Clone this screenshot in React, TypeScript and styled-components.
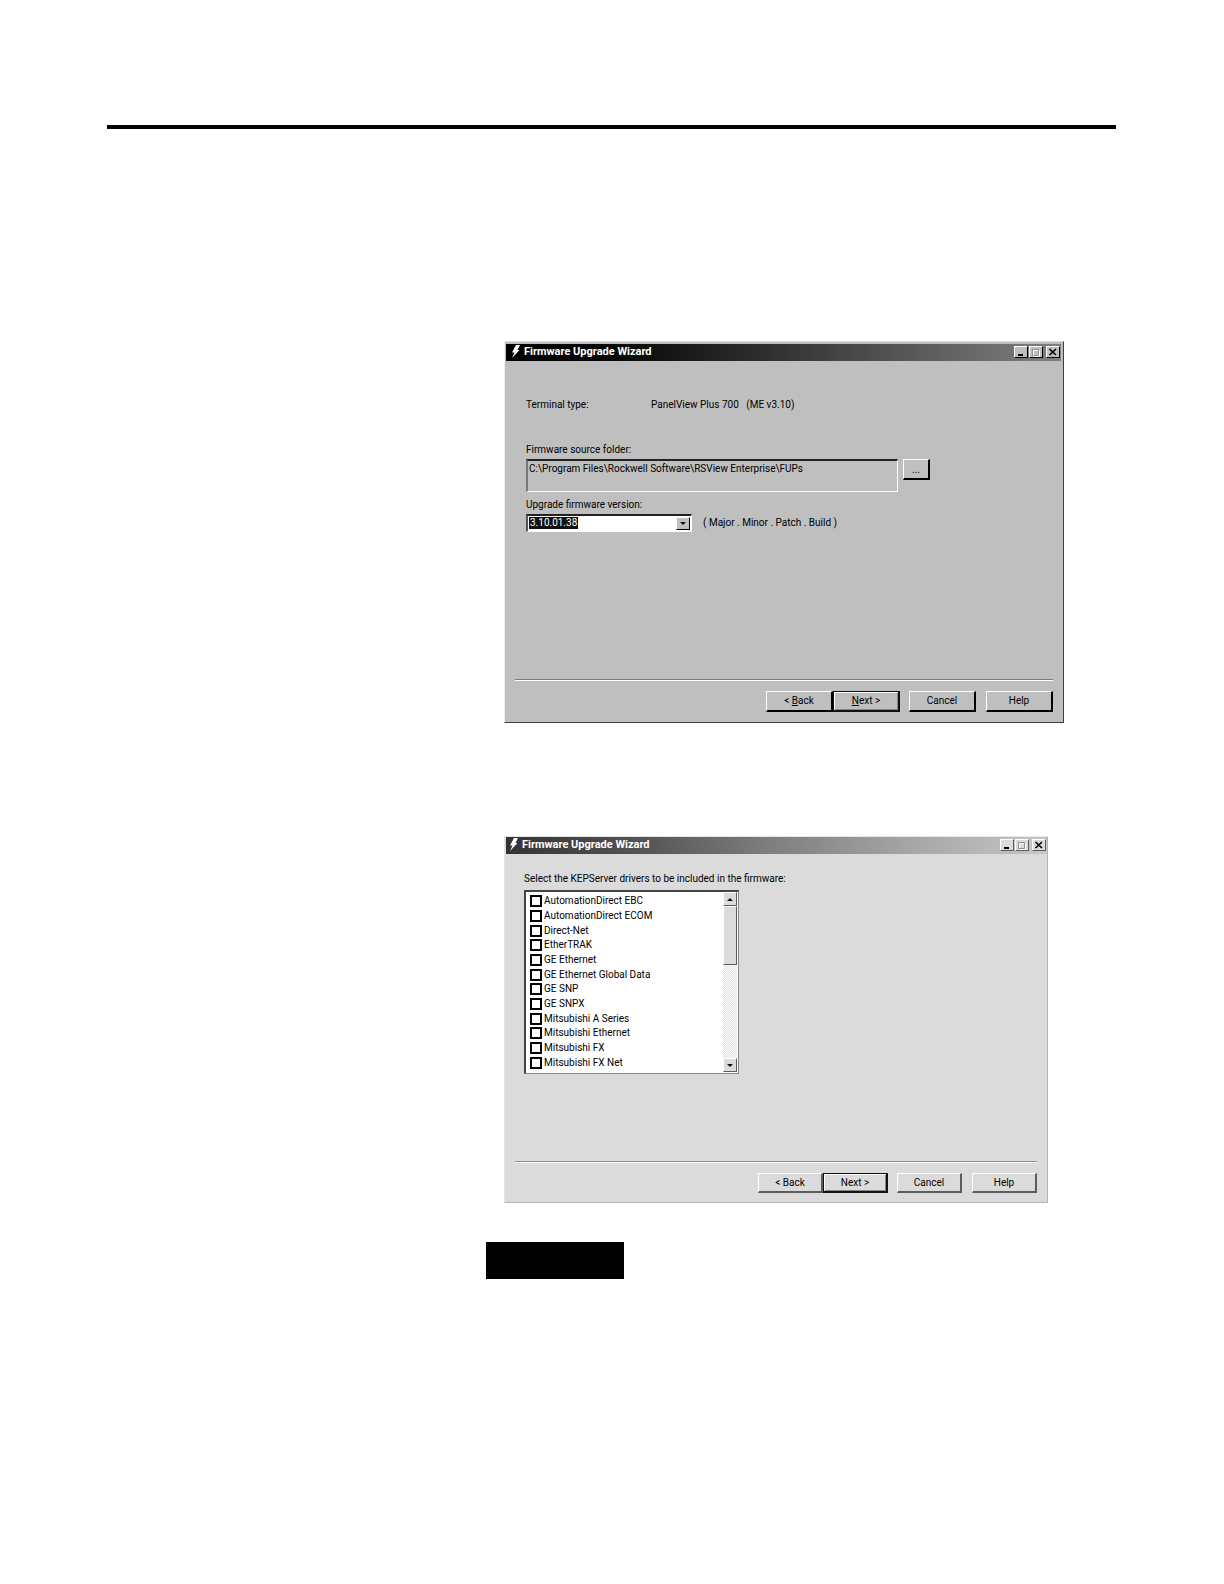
import React from "react";
import styled, { createGlobalStyle, css, ThemeProvider } from "styled-components";

type Tone = {
  face: string;
  title: string;
  hi: string;
  edgeTop: string;
  edgeLeft: string;
  edgeDark: string;
  shadow: string;
  groove: string;
};

const darkTone: Tone = {
  face: "#bfbfbf",
  title: "linear-gradient(90deg, #000 0%, #080808 20%, #2c2c2c 45%, #4c4c4c 65%, #6a6a6a 85%, #808080 100%)",
  hi: "#fff",
  edgeTop: "#ddd",
  edgeLeft: "#efefef",
  edgeDark: "#404040",
  shadow: "#000",
  groove: "#7a7a7a",
};

const lightTone: Tone = {
  face: "#dbdbdb",
  title: "linear-gradient(90deg, #333 0%, #555 25%, #808080 50%, #a6a6a6 75%, #c6c6c6 100%)",
  hi: "#fff",
  edgeTop: "#e6e6e6",
  edgeLeft: "#e6e6e6",
  edgeDark: "#b4b4b4",
  shadow: "#5c5c5c",
  groove: "#8c8c8c",
};

const Global = createGlobalStyle`
  *, *::before, *::after { box-sizing: border-box; }
  body { margin: 0; background: #fff; }
  body, button, select, textarea, input {
    font-family: Roboto, "Liberation Sans", sans-serif;
    font-size: 10px;
    line-height: 12px;
    color: #000;
  }
`;

const Page = styled.main`
  padding: 125px 108px 304px 107px;
`;

const Rule = styled.hr`
  height: 4px;
  margin: 0;
  border: 0;
  background: #000;
`;

const Column = styled.div`
  display: flex;
  flex-direction: column;
  padding: 212px 0 0 379px;
`;

const Window = styled.section<{ $width: number; $gap: number }>`
  display: flex;
  flex-direction: column;
  max-width: ${(p) => p.$width}px;
  margin: 0 0 ${(p) => p.$gap}px 18px;
  border: 1px solid;
  border-color: ${({ theme }) => `${theme.edgeTop} ${theme.edgeDark} ${theme.edgeDark} ${theme.edgeLeft}`};
  background: ${({ theme }) => theme.face};
`;

const TitleBar = styled.header<{ $inset: number }>`
  display: flex;
  align-items: center;
  gap: 3px;
  height: 17px;
  margin: ${(p) => p.$inset}px ${(p) => p.$inset}px 0 1px;
  padding: 0 1px 1px ${(p) => p.$inset + 3}px;
  background: ${({ theme }) => theme.title};
  color: #fff;
`;

const Title = styled.h2`
  flex: 1;
  margin: 0;
  font-size: 11px;
  font-weight: 700;
  line-height: 14px;
`;

const CaptionButtons = styled.div`
  display: flex;
  gap: 1px;
`;

const raised = css`
  border: 1px solid;
  border-color: ${({ theme }) => `${theme.hi} ${theme.shadow} ${theme.shadow} ${theme.hi}`};
  background: ${({ theme }) => theme.face};
`;

const CaptionButton = styled.button`
  ${raised}
  display: grid;
  place-items: center;
  width: 14px;
  height: 12px;
  padding: 0;
  &:last-child { margin-left: 2px; }
`;

const Body = styled.div<{ $height: number; $top: number; $side: number }>`
  display: flex;
  flex-direction: column;
  align-items: flex-start;
  min-height: ${(p) => p.$height}px;
  padding: ${(p) => p.$top}px ${(p) => p.$side}px 0;
`;

const Facts = styled.dl`
  display: grid;
  grid-template-columns: 125px auto;
  margin: 0 0 33px 1px;
  dd { margin: 0; white-space: pre; }
`;

const Label = styled.label`
  margin-left: 1px;
`;

const SourceRow = styled.div`
  display: flex;
  align-items: flex-start;
  gap: 5px;
  width: 100%;
  margin: 3px 0 7px 1px;
`;

const PathField = styled.textarea`
  flex: 0 1 372px;
  min-width: 0;
  height: 33px;
  padding: 2px 1px;
  border: 1px solid;
  border-width: 2px 1px 1px 2px;
  border-color: #222 #fff #fff #777;
  border-radius: 0;
  background: transparent;
  resize: none;
  overflow: hidden;
  outline: 0;
`;

const BrowseButton = styled.button`
  ${raised}
  width: 27px;
  height: 21px;
  padding: 2px 0 0;
  border-width: 1px 2px 2px 1px;
`;

const VersionRow = styled.div`
  display: flex;
  align-items: center;
  gap: 11px;
  margin: 3px 0 0 1px;
`;

const Combo = styled.div`
  display: grid;
  grid-template-columns: 1fr 14px;
  width: 166px;
  height: 18px;
  padding: 1px;
  border: 1px solid;
  border-width: 2px 1px 1px 2px;
  border-color: #222 #fff #fff #555;
  background: #fff;
`;

const ComboSelect = styled.select`
  grid-area: 1 / 1 / 2 / 3;
  appearance: none;
  height: 12px;
  padding: 0 16px 0 1px;
  border: 0;
  border-radius: 0;
  outline: 0;
  background: linear-gradient(#111, #111) no-repeat 0 0 / 49px 12px;
  color: #fff;
  option { color: #000; background: #fff; }
`;

const Arrow = styled.span`
  ${raised}
  display: grid;
  place-items: center;
  pointer-events: none;
`;

const ComboArrow = styled(Arrow)`
  grid-area: 1 / 2 / 2 / 3;
  z-index: 1;
  height: 13px;
`;

const Footer = styled.footer`
  display: flex;
  justify-content: flex-end;
  margin: 0 10px;
  padding: 11px 0 ${({ theme }) => (theme === lightTone ? 9 : 10)}px;
  border-top: 1px solid ${({ theme }) => theme.groove};
  box-shadow: inset 0 1px #fff;
`;

const WizardButton = styled.button<{ $w: number; $h: number; $gap?: number; $primary?: boolean }>`
  ${raised}
  flex: 0 1 ${(p) => p.$w}px;
  height: ${(p) => p.$h}px;
  margin-left: ${(p) => p.$gap ?? 0}px;
  padding: 0;
  border-width: 1px 2px 2px 1px;
  ${(p) =>
    p.$primary &&
    css`
      border: 2px solid #111;
      border-width: 1px 2px 2px 1px;
      box-shadow: inset 1px 1px #fff, inset -1px -1px #888;
    `}
`;

const DriverGroup = styled.fieldset`
  min-width: 0;
  margin: 0;
  padding: 0;
  border: 0;
  legend { margin: 0 0 5px; padding: 0; }
`;

const ListBox = styled.div`
  display: grid;
  grid-template-columns: 1fr 15px;
  width: 215px;
  height: 184px;
  border: 2px solid;
  border-width: 2px 1px 1px 2px;
  border-color: #444 #888 #888 #444;
  background: #fff;
`;

const DriverList = styled.ul`
  display: grid;
  grid-auto-rows: 1fr;
  margin: 0;
  padding: 2px 0 3px 4px;
  list-style: none;
`;

const Driver = styled.li`
  display: flex;
  align-items: center;
  label { display: flex; align-items: center; gap: 2px; }
`;

const Check = styled.input`
  appearance: none;
  width: 12px;
  height: 12px;
  margin: 0;
  border: 2px solid #000;
  background: #fff;
  &:checked { background: #000; box-shadow: inset 0 0 0 2px #fff; }
`;

const ScrollBar = styled.div`
  display: grid;
  grid-template-rows: 14px 59px 1fr 14px;
  margin: 0 1px 1px 0;
  background: repeating-conic-gradient(#fff 0 25%, #dedede 0 50%) 0 0 / 2px 2px;
`;

const ScrollButton = styled.button`
  ${raised}
  display: grid;
  place-items: center;
  padding: 0;
`;

const Thumb = styled.div`
  ${raised}
`;

const Notice = styled.div`
  width: 138px;
  height: 37px;
  background: #000;
`;

const Bolt = () => (
  <svg width="10" height="14" viewBox="0 0 10 14" aria-hidden="true">
    <path d="M5 0 9 0 6.500 5 8.500 5 1 13 3.500 7.500 1 7.500Z" fill="#fff" />
  </svg>
);

const Triangle = ({ up }: { up?: boolean }) => (
  <svg width="6" height="3" viewBox="0 0 6 3" aria-hidden="true">
    <path d={up ? "M0 3 3 0 6 3Z" : "M0 0H6L3 3Z"} fill="#111" />
  </svg>
);

const Minimize = () => (
  <svg width="10" height="8" viewBox="0 0 10 8" aria-hidden="true">
    <path d="M2 6H7V8H2Z" fill="#000" />
  </svg>
);

const Maximize = () => (
  <svg width="10" height="9" viewBox="0 0 10 9" aria-hidden="true">
    <path d="M2.500 2.500H8.500V8.500H2.500Z" fill="none" stroke="#fff" />
    <path d="M1.500 1.500H7.500V7.500H1.500Z" fill="none" stroke="#909090" />
  </svg>
);

const Close = () => (
  <svg width="10" height="8" viewBox="0 0 10 8" aria-hidden="true">
    <path d="M1.500 1 8 7M8 1 1.500 7" stroke="#000" strokeWidth="1.700" />
  </svg>
);

const WindowTitle = ({ inset }: { inset: number }) => (
  <TitleBar $inset={inset}>
    <Bolt />
    <Title>Firmware Upgrade Wizard</Title>
    <CaptionButtons>
      <CaptionButton type="button" aria-label="Minimize"><Minimize /></CaptionButton>
      <CaptionButton type="button" aria-label="Maximize" disabled><Maximize /></CaptionButton>
      <CaptionButton type="button" aria-label="Close"><Close /></CaptionButton>
    </CaptionButtons>
  </TitleBar>
);

const drivers = [
  "AutomationDirect EBC",
  "AutomationDirect ECOM",
  "Direct-Net",
  "EtherTRAK",
  "GE Ethernet",
  "GE Ethernet Global Data",
  "GE SNP",
  "GE SNPX",
  "Mitsubishi A Series",
  "Mitsubishi Ethernet",
  "Mitsubishi FX",
  "Mitsubishi FX Net",
];

const FirmwareWindow = () => (
  <ThemeProvider theme={darkTone}>
    <Window $width={560} $gap={113}>
      <WindowTitle inset={2} />
      <Body $height={318} $top={38} $side={20}>
        <Facts>
          <dt>Terminal type:</dt>
          <dd>{"PanelView Plus 700   (ME v3.10)"}</dd>
        </Facts>
        <Label htmlFor="source">Firmware source folder:</Label>
        <SourceRow>
          <PathField
            id="source"
            readOnly
            spellCheck={false}
            value={"C:\\Program Files\\Rockwell Software\\RSView Enterprise\\FUPs"}
          />
          <BrowseButton type="button">...</BrowseButton>
        </SourceRow>
        <Label htmlFor="version">Upgrade firmware version:</Label>
        <VersionRow>
          <Combo>
            <ComboSelect id="version" defaultValue="3.10.01.38">
              <option>3.10.01.38</option>
            </ComboSelect>
            <ComboArrow><Triangle /></ComboArrow>
          </Combo>
          <span>( Major . Minor . Patch . Build )</span>
        </VersionRow>
      </Body>
      <Footer>
        <WizardButton type="button" $w={67} $h={21}>&lt; <u>B</u>ack</WizardButton>
        <WizardButton type="button" $w={67} $h={21} $primary><u>N</u>ext &gt;</WizardButton>
        <WizardButton type="button" $w={67} $h={21} $gap={9}>Cancel</WizardButton>
        <WizardButton type="button" $w={67} $h={21} $gap={10}>Help</WizardButton>
      </Footer>
    </Window>
  </ThemeProvider>
);

const DriverWindow = () => (
  <ThemeProvider theme={lightTone}>
    <Window $width={544} $gap={39}>
      <WindowTitle inset={0} />
      <Body $height={307} $top={19} $side={19}>
        <DriverGroup>
          <legend>Select the KEPServer drivers to be included in the firmware:</legend>
          <ListBox>
            <DriverList>
              {drivers.map((name) => (
                <Driver key={name}>
                  <label><Check type="checkbox" />{name}</label>
                </Driver>
              ))}
            </DriverList>
            <ScrollBar>
              <ScrollButton type="button" aria-label="Scroll up"><Triangle up /></ScrollButton>
              <Thumb />
              <span />
              <ScrollButton type="button" aria-label="Scroll down"><Triangle /></ScrollButton>
            </ScrollBar>
          </ListBox>
        </DriverGroup>
      </Body>
      <Footer>
        <WizardButton type="button" $w={65} $h={20}>&lt; Back</WizardButton>
        <WizardButton type="button" $w={65} $h={20} $primary>Next &gt;</WizardButton>
        <WizardButton type="button" $w={65} $h={20} $gap={9}>Cancel</WizardButton>
        <WizardButton type="button" $w={65} $h={20} $gap={10}>Help</WizardButton>
      </Footer>
    </Window>
  </ThemeProvider>
);

export default function App() {
  return (
    <>
      <Global />
      <Page>
        <Rule />
        <Column>
          <FirmwareWindow />
          <DriverWindow />
          <Notice />
        </Column>
      </Page>
    </>
  );
}
